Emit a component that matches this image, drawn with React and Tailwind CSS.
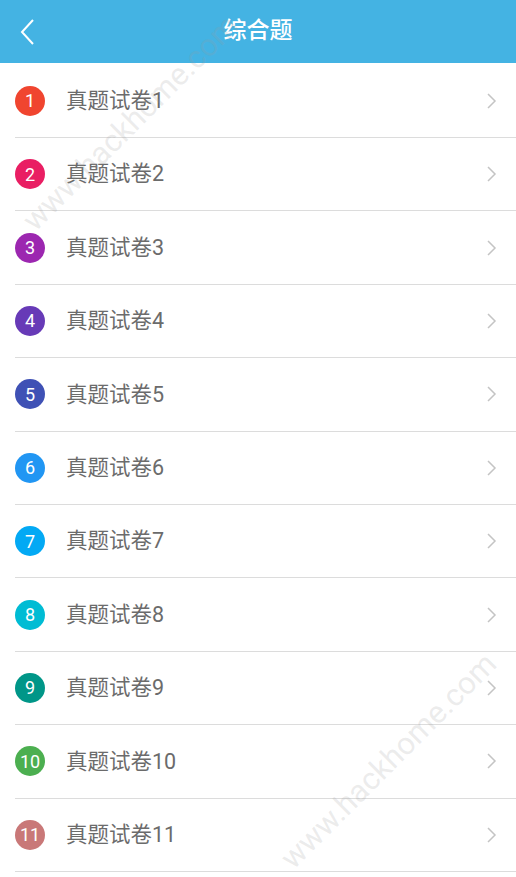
import React from "react";

const items = [
  { n: 1, color: "bg-[#f0452f]" },
  { n: 2, color: "bg-[#e91e63]" },
  { n: 3, color: "bg-[#9c27b0]" },
  { n: 4, color: "bg-[#673ab7]" },
  { n: 5, color: "bg-[#3f51b5]" },
  { n: 6, color: "bg-[#2196f3]" },
  { n: 7, color: "bg-[#03a9f4]" },
  { n: 8, color: "bg-[#00bcd4]" },
  { n: 9, color: "bg-[#009688]" },
  { n: 10, color: "bg-[#4caf50]" },
  { n: 11, color: "bg-[#c97878]" },
];

const font = { fontFamily: '"Roboto", "Noto Sans CJK SC", sans-serif' };

const Row = ({ n, color }) => (
  <div className="h-[73.4px] ml-[15px] border-b border-[#dcdcdc] flex items-center">
    <div
      className={`w-[30px] h-[30px] rounded-full ${color} text-white text-[18px] flex items-center justify-center shrink-0`}
    >
      {n}
    </div>
    <div className="ml-[21px] text-[21.5px] text-[#6b6b6b] flex-1 leading-none">真题试卷{n}</div>
    <svg width="12" height="16" viewBox="0 0 12 16" className="mr-[18px]">
      <path d="M2 1 L9 8 L2 15" fill="none" stroke="#c4c4c4" strokeWidth="1.5" />
    </svg>
  </div>
);

export default function App() {
  return (
    <div className="w-[516px] h-[877px] bg-white relative overflow-hidden" style={font}>
      <div className="h-[63px] bg-[#44b3e3] flex items-center relative">
        <svg width="16" height="28" viewBox="0 0 16 28" className="ml-[19px]">
          <path d="M14 2 L3 14 L14 26" fill="none" stroke="white" strokeWidth="2" />
        </svg>
        <div className="absolute inset-0 flex items-center justify-center text-white text-[23px] font-medium">
          综合题
        </div>
      </div>
      <div className="pt-[1.6px]">
        {items.map((it) => (
          <Row key={it.n} {...it} />
        ))}
      </div>
      <div className="absolute left-[-14px] top-[100px] rotate-[-45deg] text-[31px] text-[#9a9a9a]/20 pointer-events-none select-none">
        www.hackhome.com
      </div>
      <div className="absolute left-[244px] top-[738px] rotate-[-45deg] text-[31px] text-[#9a9a9a]/20 pointer-events-none select-none">
        www.hackhome.com
      </div>
    </div>
  );
}
